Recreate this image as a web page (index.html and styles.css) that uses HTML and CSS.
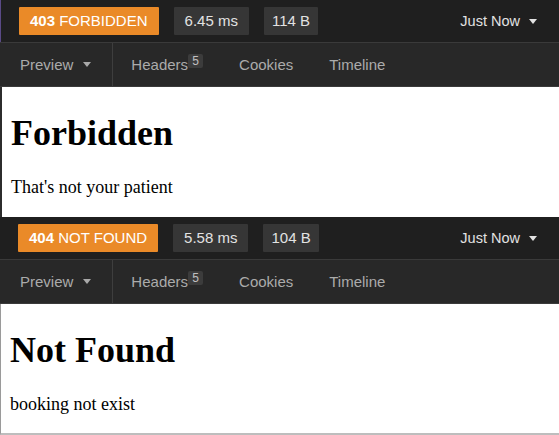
FILE: index.html
```html
<!DOCTYPE html>
<html>
<head>
<meta charset="utf-8">
<link rel="stylesheet" href="styles.css">
</head>
<body>
<section class="panel panel-first">
  <div class="status-bar">
    <span class="pill pill-status"><b>403</b> FORBIDDEN</span>
    <span class="pill">6.45 ms</span>
    <span class="pill pill-size">114 B</span>
    <span class="when">Just Now <i class="caret caret-light"></i></span>
  </div>
  <nav class="tabs">
    <span class="tab tab-preview">Preview <i class="caret"></i></span>
    <span class="tab">Headers<sup class="count">5</sup></span>
    <span class="tab">Cookies</span>
    <span class="tab">Timeline</span>
  </nav>
  <div class="preview">
    <h1 class="title">Forbidden</h1>
    <p class="message">That's not your patient</p>
  </div>
</section>
<section class="panel panel-second">
  <div class="status-bar">
    <span class="pill pill-status"><b>404</b> NOT FOUND</span>
    <span class="pill">5.58 ms</span>
    <span class="pill pill-size">104 B</span>
    <span class="when">Just Now <i class="caret caret-light"></i></span>
  </div>
  <nav class="tabs">
    <span class="tab tab-preview">Preview <i class="caret"></i></span>
    <span class="tab">Headers<sup class="count">5</sup></span>
    <span class="tab">Cookies</span>
    <span class="tab">Timeline</span>
  </nav>
  <div class="preview">
    <h1 class="title">Not Found</h1>
    <p class="message">booking not exist</p>
  </div>
</section>
</body>
</html>
```

FILE: styles.css
```css
html, body {
  margin: 0;
  padding: 0;
  background: #ffffff;
}
body {
  width: 559px;
  overflow: hidden;
  font-family: "Liberation Sans", Arial, sans-serif;
}
.panel {
  display: flex;
  flex-direction: column;
}
.status-bar {
  height: 42px;
  background: #1f1f1f;
  border-bottom: 1px solid #3a3a3a;
  display: flex;
  align-items: center;
  gap: 15px;
  padding: 0 22px 0 19px;
  box-sizing: content-box;
}
.panel-first .status-bar {
  box-shadow: inset 1px 0 0 #5a4a86;
}
.pill {
  height: 28px;
  line-height: 28px;
  padding: 0 11px;
  background: #363636;
  color: #e2e2e2;
  font-size: 15px;
  border-radius: 1px;
  white-space: nowrap;
}
.pill-size {
  padding: 0 8px;
}
.pill-status {
  background: #ea8a28;
  color: #ffffff;
}
.pill-status b {
  font-weight: 700;
}
.panel-second .status-bar {
  padding-left: 18px;
}
.when {
  margin-left: auto;
  color: #e2e2e2;
  font-size: 14.5px;
  display: flex;
  align-items: center;
  gap: 9px;
}
.caret {
  display: inline-block;
  width: 0;
  height: 0;
  border-left: 4.5px solid transparent;
  border-right: 4.5px solid transparent;
  border-top: 5px solid #a9a9a9;
}
.caret-light {
  border-top-color: #e2e2e2;
}
.tabs {
  height: 43px;
  background: #282828;
  border-bottom: 1px solid #3a3a3a;
  display: flex;
  align-items: stretch;
  color: #ababab;
  font-size: 15px;
}
.tab {
  display: flex;
  align-items: center;
  padding: 0 18px;
  white-space: nowrap;
}
.tab-preview {
  padding-left: 20px;
  padding-right: 21px;
  gap: 10px;
  border-right: 1px solid #3e3e3e;
}
.count {
  display: inline-block;
  width: 15px;
  height: 14px;
  line-height: 14px;
  text-align: center;
  background: #3c3c3c;
  color: #c0c0c0;
  font-size: 12px;
  border-radius: 2px;
  position: relative;
  top: -4px;
  margin-left: 0;
}
.preview {
  display: flow-root;
  background: #ffffff;
  color: #000000;
  font-family: "Liberation Serif", "Times New Roman", serif;
  padding: 2px 9px 1px 9px;
  height: 130px;
  box-sizing: border-box;
}
.panel-first .preview {
  border-left: 2px solid #2c2c2c;
}
.panel-second .preview {
  border-left: 1px solid #9a9a9a;
  border-bottom: 2px solid #bdbdbd;
  height: 131px;
}
.title {
  font-size: 36px;
  line-height: 40px;
  font-weight: 700;
  margin: 24px 0;
}
.message {
  font-size: 18px;
  line-height: 21px;
  margin: 18px 0;
}
```
